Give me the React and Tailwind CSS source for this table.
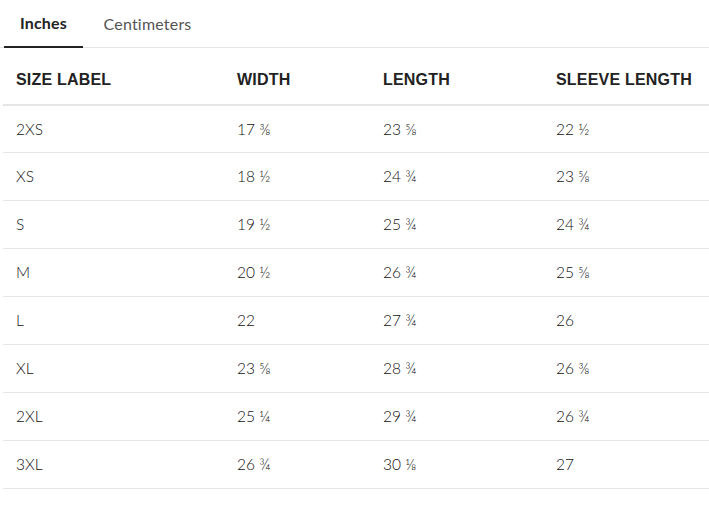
import React, { useState } from "react";

const rows = [
  ["2XS", "17 ⅜", "23 ⅝", "22 ½"],
  ["XS", "18 ½", "24 ¾", "23 ⅝"],
  ["S", "19 ½", "25 ¾", "24 ¾"],
  ["M", "20 ½", "26 ¾", "25 ⅝"],
  ["L", "22", "27 ¾", "26"],
  ["XL", "23 ⅝", "28 ¾", "26 ⅜"],
  ["2XL", "25 ¼", "29 ¾", "26 ¾"],
  ["3XL", "26 ¾", "30 ⅛", "27"],
];

const headers = ["SIZE LABEL", "WIDTH", "LENGTH", "SLEEVE LENGTH"];
const colWidths = ["w-[221px]", "w-[146px]", "w-[173px]", ""];

export default function App() {
  const [unit, setUnit] = useState("in");

  return (
    <div className="w-[709px] bg-white text-[#222] font-['Lato',sans-serif]">
      {/* tabs */}
      <div className="flex border-b border-[#e6e6e6] pl-1">
        <button
          onClick={() => setUnit("in")}
          className={
            unit === "in"
              ? "w-[79px] h-[48px] pb-[1px] text-[16px] tracking-[0.2px] font-bold text-[#222] border-b-2 border-[#222] -mb-[1px]"
              : "w-[79px] h-[48px] pb-[1px] text-[16px] tracking-[0.2px] text-[#555] -mb-[1px]"
          }
        >
          Inches
        </button>
        <button
          onClick={() => setUnit("cm")}
          className={
            unit === "cm"
              ? "ml-[2px] w-[125px] h-[48px] pb-[1px] text-[16px] tracking-[0.2px] font-bold text-[#222] border-b-2 border-[#222] -mb-[1px]"
              : "ml-[2px] w-[125px] h-[48px] pb-[1px] text-[16px] tracking-[0.2px] text-[#555] -mb-[1px]"
          }
        >
          Centimeters
        </button>
      </div>

      {/* table */}
      <table className="ml-[3px] w-[706px] border-collapse text-left">
        <thead>
          <tr className="border-b-2 border-[#e5e5e5]">
            {headers.map((h, i) => (
              <th
                key={h}
                className={`${colWidths[i]} h-[57px] pl-[13px] pt-[8px] text-[16px] tracking-[0.2px] font-semibold text-[#222] font-['Liberation_Sans',Arial,sans-serif]`}
              >
                {h}
              </th>
            ))}
          </tr>
        </thead>
        <tbody>
          {rows.map((r) => (
            <tr key={r[0]} className="border-b border-[#e6e6e6]">
              {r.map((c, i) => (
                <td
                  key={i}
                  className="h-[47.95px] pl-[13px] text-[15.5px] font-light text-[#111]"
                >
                  {c}
                </td>
              ))}
            </tr>
          ))}
        </tbody>
      </table>
    </div>
  );
}
